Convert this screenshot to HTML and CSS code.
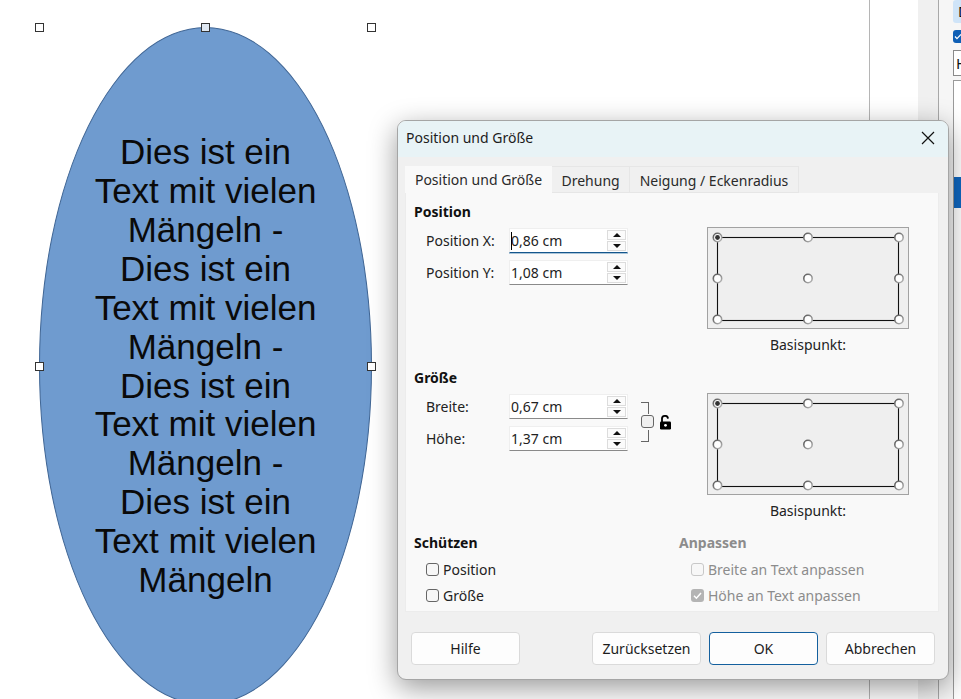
FILE: index.html
```html
<!DOCTYPE html>
<html lang="de">
<head>
    <meta charset="UTF-8">
    <meta name="viewport" content="width=device-width, initial-scale=1.0">
    <title>Position und Größe</title>
    <link rel="stylesheet" href="styles.css">
</head>
<body>
    <svg class="defs" width="0" height="0">
        <defs>
            <linearGradient id="ring" x1="0" y1="0" x2="1" y2="1">
                <stop offset="0" stop-color="#555"/>
                <stop offset="1" stop-color="#bbb"/>
            </linearGradient>
        </defs>
        <symbol id="basepoint" viewBox="0 0 202 102">
            <rect x="10.5" y="10.5" width="181" height="83" fill="none" stroke="#111" stroke-width="1.1"/>
            <g fill="#fff" stroke="url(#ring)" stroke-width="1.6">
                <circle cx="10.5" cy="10.5" r="4.2"/>
                <circle cx="101" cy="10.5" r="4.2"/>
                <circle cx="192" cy="10.5" r="4.2"/>
                <circle cx="10.5" cy="51.5" r="4.2"/>
                <circle cx="101" cy="51.5" r="4.2"/>
                <circle cx="192" cy="51.5" r="4.2"/>
                <circle cx="10.5" cy="92.5" r="4.2"/>
                <circle cx="101" cy="92.5" r="4.2"/>
                <circle cx="192" cy="92.5" r="4.2"/>
            </g>
            <circle cx="10.5" cy="10.5" r="2.4" fill="#333"/>
        </symbol>
    </svg>

    <!-- Zeichenfläche -->
    <div class="canvas">
        <div class="ellipse">
            <p>Dies ist ein<br>Text mit vielen<br>Mängeln -<br>Dies ist ein<br>Text mit vielen<br>Mängeln -<br>Dies ist ein<br>Text mit vielen<br>Mängeln -<br>Dies ist ein<br>Text mit vielen<br>Mängeln</p>
        </div>
        <span class="handle h-tl"></span>
        <span class="handle h-tc"></span>
        <span class="handle h-tr"></span>
        <span class="handle h-ml"></span>
        <span class="handle h-mr"></span>
    </div>

    <!-- Seitenleiste -->
    <div class="gutter"></div>
    <aside class="sidebar">
        <div class="side-shade"></div>
        <div class="side-panel">
            <div class="side-btn">D</div>
            <div class="side-check">
                <svg width="8" height="13" viewBox="0 0 8 13"><path d="M2 6.5L4 8.7L8 4.5" fill="none" stroke="#fff" stroke-width="1.2"/></svg>
            </div>
            <div class="side-input">H</div>
            <div class="side-list"><div class="side-selected"></div></div>
        </div>
    </aside>

    <!-- Dialog -->
    <div class="dialog">
        <div class="titlebar">
            <span>Position und Größe</span>
            <svg class="close" width="14" height="14" viewBox="0 0 14 14"><path d="M1 1L13 13M13 1L1 13" stroke="#111" stroke-width="1.2" fill="none"/></svg>
        </div>
        <div class="tabs">
            <div class="tab active">Position und Größe</div>
            <div class="tab">Drehung</div>
            <div class="tab">Neigung / Eckenradius</div>
        </div>
        <div class="panel">
            <section class="group group-pos">
                <div class="fields">
                    <h4>Position</h4>
                    <div class="row">
                        <label>Position X:</label>
                        <div class="spin focused"><span class="value"><i class="caret"></i>0,86 cm</span><span class="arrows"><b class="up"></b><b class="down"></b></span></div>
                    </div>
                    <div class="row">
                        <label>Position Y:</label>
                        <div class="spin"><span class="value">1,08 cm</span><span class="arrows"><b class="up"></b><b class="down"></b></span></div>
                    </div>
                </div>
                <div class="base">
                    <svg class="basebox" width="202" height="102"><use href="#basepoint"/></svg>
                    <div class="base-label">Basispunkt:</div>
                </div>
            </section>

            <section class="group group-size">
                <div class="fields">
                    <h4>Größe</h4>
                    <div class="row">
                        <label>Breite:</label>
                        <div class="spin"><span class="value">0,67 cm</span><span class="arrows"><b class="up"></b><b class="down"></b></span></div>
                    </div>
                    <div class="row">
                        <label>Höhe:</label>
                        <div class="spin"><span class="value">1,37 cm</span><span class="arrows"><b class="up"></b><b class="down"></b></span></div>
                    </div>
                    <div class="link">
                        <span class="bracket-top"></span>
                        <span class="bracket-bottom"></span>
                        <span class="box link-box"></span>
                        <svg class="lock" width="13" height="15" viewBox="0 0 13 15">
                            <path d="M3 7V4.2a3 3 0 0 1 6-.6" fill="none" stroke="#000" stroke-width="1.8"/>
                            <rect x="1" y="6.5" width="11" height="8" rx="1.2" fill="#000"/>
                            <circle cx="6.5" cy="10.3" r="1.4" fill="#fff"/>
                        </svg>
                    </div>
                </div>
                <div class="base">
                    <svg class="basebox" width="202" height="102"><use href="#basepoint"/></svg>
                    <div class="base-label">Basispunkt:</div>
                </div>
            </section>

            <section class="group group-opts">
                <div class="opts">
                    <h4>Schützen</h4>
                    <div class="opt"><span class="box"></span>Position</div>
                    <div class="opt"><span class="box"></span>Größe</div>
                </div>
                <div class="opts disabled">
                    <h4>Anpassen</h4>
                    <div class="opt"><span class="box"></span>Breite an Text anpassen</div>
                    <div class="opt"><span class="box checked">
                        <svg width="13" height="13" viewBox="0 0 13 13"><path d="M3 6.8L5.4 9.2L10 4" fill="none" stroke="#fff" stroke-width="1.5"/></svg>
                    </span>Höhe an Text anpassen</div>
                </div>
            </section>
        </div>
        <div class="buttons">
            <button class="btn help">Hilfe</button>
            <button class="btn">Zurücksetzen</button>
            <button class="btn default">OK</button>
            <button class="btn">Abbrechen</button>
        </div>
    </div>
</body>
</html>
```

FILE: styles.css
```css
/* Grundlayout */
html, body {
    margin: 0;
    height: 100%;
}

body {
    position: relative;
    width: 961px;
    height: 699px;
    overflow: hidden;
    background-color: #fff;
    font-family: "Noto Sans", sans-serif;
    font-size: 14px;
    color: #222;
}

.defs {
    position: absolute;
}

/* Zeichenfläche */
.canvas {
    position: absolute;
    inset: 0;
}

.ellipse {
    position: absolute;
    left: 39px;
    top: 27px;
    width: 333px;
    height: 678px;
    box-sizing: border-box;
    border: 1px solid #3f6594;
    border-radius: 50%;
    background-color: #6f9bcf;
    display: flex;
    align-items: center;
    justify-content: center;
}

.ellipse p {
    margin: 0 0 -1px;
    font-family: "Liberation Sans", Arial, sans-serif;
    font-size: 35px;
    line-height: 38.9px;
    text-align: center;
    color: #0a0a0a;
}

.handle {
    position: absolute;
    width: 9px;
    height: 9px;
    box-sizing: border-box;
    border: 1px solid #333;
    background-color: #fff;
}

.h-tl { left: 35px; top: 23px; }
.h-tc { left: 201px; top: 23px; background-color: #dfe8f2; }
.h-tr { left: 367px; top: 23px; }
.h-ml { left: 35px; top: 362px; }
.h-mr { left: 367px; top: 362px; }

/* Seitenleiste */
.gutter {
    position: absolute;
    left: 869px;
    top: 0;
    width: 49px;
    height: 100%;
    box-sizing: border-box;
    border-left: 1px solid #b5b5b5;
    background-color: #fff;
}

.sidebar {
    position: absolute;
    left: 918px;
    top: 0;
    width: 43px;
    height: 100%;
    display: flex;
    overflow: hidden;
}

.side-shade {
    flex: none;
    width: 21px;
    box-sizing: border-box;
    border-right: 1px solid #a8a8a8;
    background-color: #f0f0f0;
}

.side-panel {
    flex: 1;
    min-width: 0;
    box-sizing: border-box;
    padding-left: 14px;
    background-color: #f6f6f6;
}

.side-btn {
    width: 20px;
    height: 23px;
    box-sizing: border-box;
    padding-left: 5px;
    margin-bottom: 7px;
    background-color: #cfe4f8;
    border-radius: 3px;
    font-size: 15px;
    line-height: 22px;
    color: #111;
}

.side-check {
    width: 13px;
    height: 13px;
    margin-bottom: 7px;
    border-radius: 3px;
    background-color: #0f5fb5;
}

.side-check svg {
    display: block;
}

.side-input {
    width: 20px;
    height: 26px;
    box-sizing: border-box;
    padding-left: 2px;
    margin-bottom: 4px;
    border: 1px solid #8a8a8a;
    background-color: #fff;
    font-size: 15px;
    line-height: 24px;
    color: #111;
}

.side-list {
    width: 20px;
    height: 620px;
    box-sizing: border-box;
    padding-top: 96px;
    border: 1px solid #9a9a9a;
    background-color: #fff;
}

.side-selected {
    height: 31px;
    background-color: #0f66bf;
}

/* Dialog */
.dialog {
    position: absolute;
    left: 397px;
    top: 120px;
    width: 552px;
    height: 560px;
    box-sizing: border-box;
    border: 1px solid #a5a5a5;
    border-radius: 9px;
    background-color: #f0f0f0;
    box-shadow: 0 8px 28px rgba(0, 0, 0, 0.4);
    overflow: hidden;
}

.titlebar {
    height: 36px;
    box-sizing: border-box;
    display: flex;
    align-items: center;
    justify-content: space-between;
    padding: 0 13px 3px 8px;
    background-color: #e8f3f6;
    color: #1c1c1c;
}

.tabs {
    display: flex;
    height: 27px;
    margin: 9px 0 0 7px;
}

.tab {
    box-sizing: border-box;
    height: 27px;
    padding: 3px 9.5px 0;
    line-height: 22px;
    background-color: #f0f0f0;
    border: 1px solid #e6e6e6;
    border-left: none;
    color: #2a2a2a;
}

.tab.active {
    width: 147px;
    padding: 3px 0 0;
    text-align: center;
    background-color: #f9f9f9;
    border: none;
}

.panel {
    width: 534px;
    height: 419px;
    margin-left: 7px;
    box-sizing: border-box;
    background-color: #f9f9f9;
    border: 1px solid #ececec;
    border-top: none;
}

.group {
    display: flex;
    justify-content: space-between;
    padding: 0 29px 0 8px;
}

.group-pos {
    height: 166px;
    padding-top: 9px;
    box-sizing: border-box;
}

.group-size {
    height: 166px;
    box-sizing: border-box;
    padding-top: 9px;
}

h4 {
    margin: 0;
    font-size: 14px;
    font-weight: 700;
    line-height: 19px;
    color: #111;
}

.fields {
    position: relative;
    width: 280px;
}

.row {
    display: flex;
    align-items: center;
    height: 25px;
    margin-top: 7px;
    padding-left: 12px;
}

.row label {
    width: 83px;
}

/* Drehfeld */
.spin {
    display: flex;
    width: 119px;
    height: 25px;
    box-sizing: border-box;
    background-color: #fff;
    border: 1px solid #efefef;
    border-bottom: 1px solid #8a8a8a;
}

.spin.focused {
    border-bottom: 1px solid #14568c;
    box-shadow: 0 1px 0 #a9c4d8;
}

.value {
    position: relative;
    flex: 1;
    padding-left: 1px;
    line-height: 23px;
}

.caret {
    position: absolute;
    left: 1px;
    top: 3px;
    width: 1px;
    height: 18px;
    background-color: #000;
}

.arrows {
    display: flex;
    flex-direction: column;
    gap: 1px;
    width: 19px;
    margin: 1px 1px 0 0;
}

.arrows b {
    display: flex;
    align-items: center;
    justify-content: center;
    height: 10px;
    background-color: #fbfbfb;
    border: 1px solid #dcdcdc;
    box-sizing: border-box;
}

.arrows b::after {
    content: "";
    border-left: 4px solid transparent;
    border-right: 4px solid transparent;
}

.arrows .up::after {
    border-bottom: 4px solid #111;
}

.arrows .down::after {
    border-top: 4px solid #111;
}

/* Basispunkt */
.base {
    display: flex;
    flex-direction: column;
    align-items: center;
    width: 202px;
    margin-top: 25px;
}

.basebox {
    display: block;
    box-sizing: border-box;
    background-color: #efefef;
    outline: 1px solid #a2a2a2;
    outline-offset: -1px;
}

.base-label {
    margin-top: 6px;
    line-height: 20px;
}

/* Seitenverhältnis */
.link {
    position: absolute;
    left: 227px;
    top: 34px;
    width: 32px;
    height: 40px;
}

.bracket-top,
.bracket-bottom {
    position: absolute;
    left: 0;
    width: 7px;
    height: 11px;
    border-right: 1px solid #666;
}

.bracket-top {
    top: 0;
    border-top: 1px solid #666;
}

.bracket-bottom {
    bottom: 0;
    border-bottom: 1px solid #666;
}

.box {
    display: inline-block;
    flex: none;
    width: 13px;
    height: 13px;
    box-sizing: border-box;
    border: 1px solid #666;
    border-radius: 3px;
    background-color: #f7f7f7;
}

.link-box {
    position: absolute;
    left: 0;
    top: 13px;
    background-color: #f0f0f0;
}

.lock {
    position: absolute;
    left: 18px;
    top: 13px;
}

/* Optionen */
.group-opts {
    justify-content: flex-start;
    padding-top: 8px;
    padding-right: 0;
}

.opts {
    flex: none;
    width: 265px;
}

.opt {
    display: flex;
    align-items: center;
    gap: 4px;
    height: 26px;
    padding-left: 12px;
}

.opts h4 + .opt {
    margin-top: 4px;
}

.disabled,
.disabled h4 {
    color: #8c8c8c;
}

.disabled .box {
    border-color: #c8c8c8;
}

.disabled .box.checked {
    border: none;
    background-color: #b4b4b4;
}

.box svg {
    display: block;
}

/* Schaltflächen */
.buttons {
    display: flex;
    gap: 8px;
    margin: 20px 0 0 13px;
}

.btn {
    width: 109px;
    height: 33px;
    padding: 0;
    font: inherit;
    color: #1c1c1c;
    background-color: #fdfdfd;
    border: 1px solid #dadada;
    border-radius: 4px;
}

.btn.help {
    margin-right: 64px;
}

.btn.default {
    border-color: #14609e;
}
```
